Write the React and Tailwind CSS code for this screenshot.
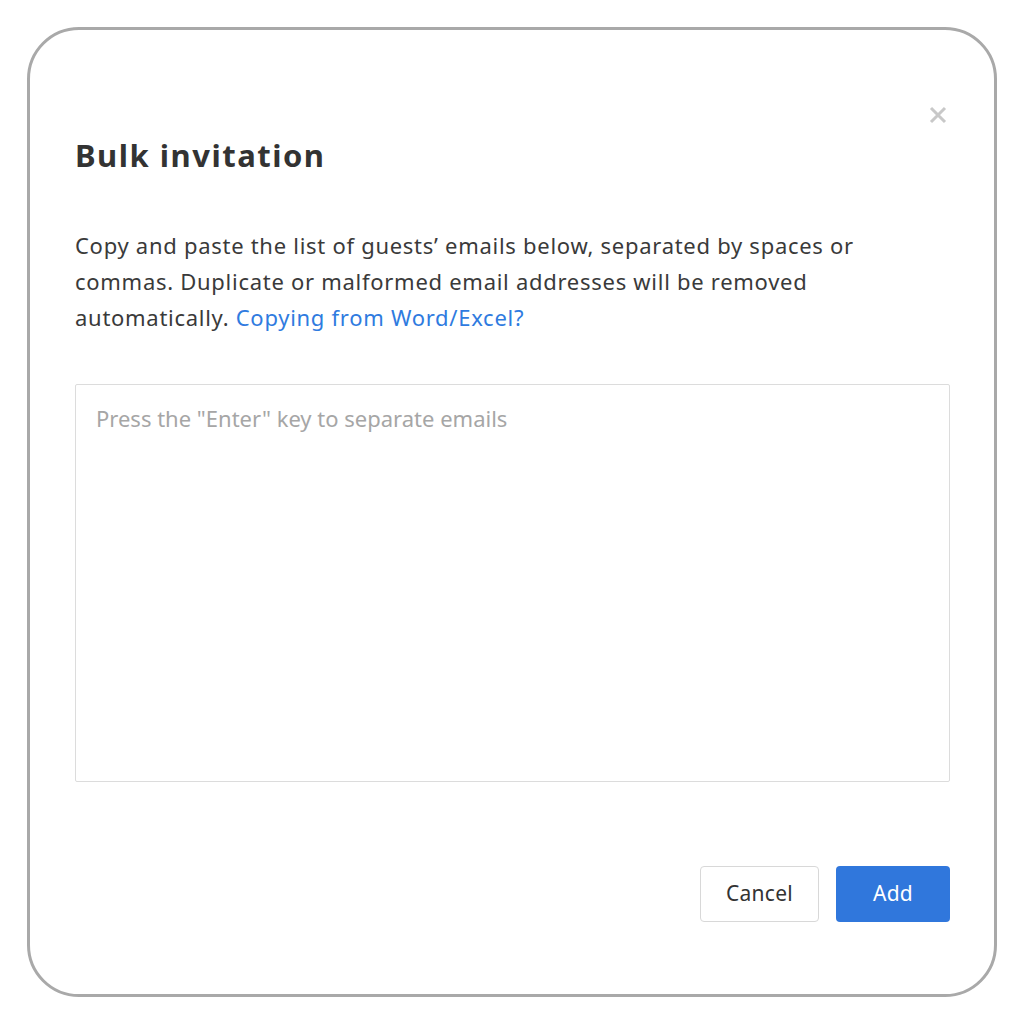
export default function App() {
  return (
    <div className="w-[1024px] h-[1024px] bg-white p-[27px]">
      <div
        className="relative w-[970px] h-[970px] border-[3px] border-[#a9a9a9] rounded-[52px] bg-white flex flex-col pl-[45px] pr-[44px] pt-[105px] pb-[72px]"
        style={{ fontFamily: '"Noto Sans", "Open Sans", sans-serif' }}
      >
        <button className="absolute right-[46px] top-[75px] text-[#c8c8c8]" aria-label="Close">
          <svg width="20" height="20" viewBox="0 0 20 20" fill="none" stroke="currentColor" strokeWidth="3" strokeLinecap="butt">
            <path d="M3 3L17 17M17 3L3 17" />
          </svg>
        </button>
        <h2 className="text-[31px] leading-[40px] font-bold text-[#333333] tracking-[1.5px]">Bulk invitation</h2>
        <p className="mt-[52px] text-[22px] leading-[36px] text-[#3a3a3a] tracking-[0.72px]">
          Copy and paste the list of guests’ emails below, separated by spaces or
          <br />
          commas. Duplicate or malformed email addresses will be removed
          <br />
          automatically. <a className="text-[#2f7be0]" href="#">Copying from Word/Excel?</a>
        </p>
        <div className="mt-[49px] h-[398px] border border-[#dcdcdc] rounded-[2px] px-[20px] pt-[18px]">
          <div className="text-[22px] leading-[30px] text-[#a6a6a6]">Press the "Enter" key to separate emails</div>
        </div>
        <div className="mt-auto flex justify-end gap-[17px]">
          <button className="w-[119px] h-[56px] border border-[#d8d8d8] rounded-[4px] text-[21px] text-[#333333] bg-white tracking-[0.3px]">Cancel</button>
          <button className="w-[114px] h-[56px] rounded-[4px] text-[21px] text-white bg-[#3077dc] tracking-[0.3px]">Add</button>
        </div>
      </div>
    </div>
  );
}
